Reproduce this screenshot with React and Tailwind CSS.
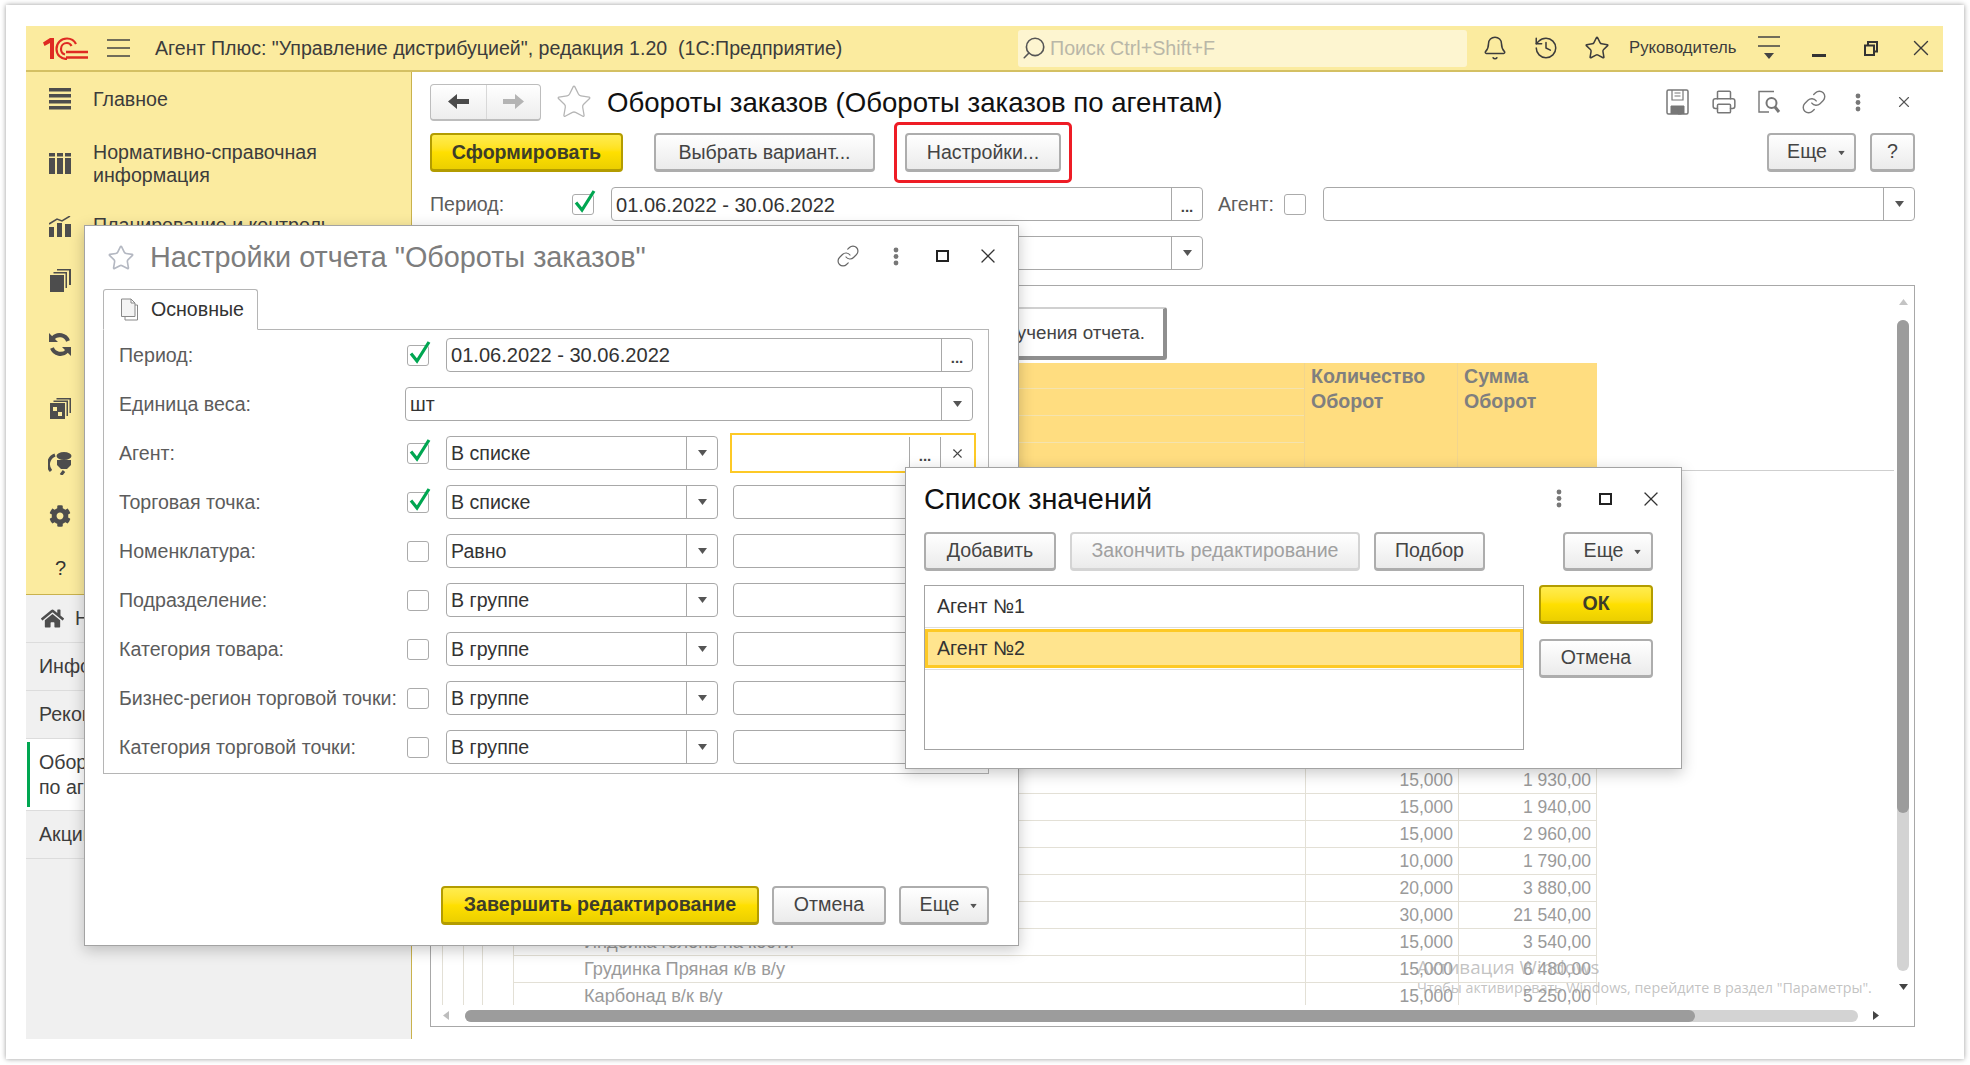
import { Bell, History, Star, Link, X, Search, Printer } from "lucide-react";
import { FaCog, FaHome } from "react-icons/fa";

const filterRows = [
  { label: "Агент:", on: true, cond: "В списке", focus: true },
  { label: "Торговая точка:", on: true, cond: "В списке" },
  { label: "Номенклатура:", on: false, cond: "Равно" },
  { label: "Подразделение:", on: false, cond: "В группе" },
  { label: "Категория товара:", on: false, cond: "В группе" },
  { label: "Бизнес-регион торговой точки:", on: false, cond: "В группе" },
  { label: "Категория торговой точки:", on: false, cond: "В группе" },
];

const reportRows = [
  { name: "", qty: "15,000", sum: "1 930,00" },
  { name: "", qty: "15,000", sum: "1 940,00" },
  { name: "", qty: "15,000", sum: "2 960,00" },
  { name: "", qty: "10,000", sum: "1 790,00" },
  { name: "", qty: "20,000", sum: "3 880,00" },
  { name: "", qty: "30,000", sum: "21 540,00" },
  { name: "Индейка голень на кости", qty: "15,000", sum: "3 540,00" },
  { name: "Грудинка Пряная к/в в/у", qty: "15,000", sum: "6 480,00" },
  { name: "Карбонад в/к в/у", qty: "15,000", sum: "5 250,00" },
];

function Logo() {
  return (
    <svg width="45" height="23" viewBox="0 0 45 23" fill="none" className="shrink-0">
      <path d="M0 5.5 L7 1 H11 V22 H7 V6 L1.5 9 Z" fill="#df2a22" />
      <path d="M33 7 C31 3 27 1.5 24 1.5 C18 1.5 13.5 6 13.5 12 C13.5 18 18 22 24 22" stroke="#df2a22" strokeWidth="2.2" />
      <path d="M28.5 9 C27.5 7 26 6 24 6 C20.5 6 18 8.5 18 12 C18 15 20 17 22 17.5" stroke="#df2a22" strokeWidth="2.2" />
      <path d="M23 15 H45 M23 20.5 H45" stroke="#df2a22" strokeWidth="2.4" />
    </svg>
  );
}

function Caret({ className = "fill-[#555]" }) {
  return (
    <svg width="9" height="6" viewBox="0 0 9 6" className={className}>
      <path d="M0 0 H9 L4.5 6 Z" />
    </svg>
  );
}

function Dots({ className = "fill-[#777]" }) {
  return (
    <svg width="6" height="19" viewBox="0 0 6 19" className={className}>
      <circle cx="3" cy="3" r="2.4" />
      <circle cx="3" cy="9.5" r="2.4" />
      <circle cx="3" cy="16" r="2.4" />
    </svg>
  );
}

function Btn({ children, className = "", disabled }) {
  return (
    <button
      className={`flex h-[39px] items-center justify-center rounded-[4px] border-2 border-b-[3px] bg-linear-to-b from-white to-[#ebebeb] text-[19.6px] ${
        disabled ? "border-[#d4d4d4] text-[#a0a0a0]" : "border-[#adadad] text-[#444]"
      } ${className}`}
    >
      {children}
    </button>
  );
}

function YellowBtn({ children, className = "" }) {
  return (
    <button
      className={`flex h-[39px] items-center justify-center rounded-[4px] border-2 border-b-[3px] border-[#b39c00] bg-linear-to-b from-[#ffec4d] via-[#ffe000] to-[#ebcf00] text-[19.6px] font-bold text-[#3d3d2a] ${className}`}
    >
      {children}
    </button>
  );
}

function MoreBtn({ className = "" }) {
  return (
    <Btn className={`gap-[10px] pl-[10px] ${className}`}>
      Еще
      <Caret className="mt-[2px] scale-75 fill-[#555]" />
    </Btn>
  );
}

function Field({ children, className = "", kind }) {
  return (
    <div className={`flex h-[34px] rounded-[4px] border border-[#a8a8a8] bg-white ${className}`}>
      <div className="flex min-w-0 flex-1 items-center overflow-hidden pt-[1px] pl-[4px] text-[19.6px] text-[#333]">{children}</div>
      {kind === "pick" && (
        <div className="flex w-[31px] items-end justify-center border-l border-[#a8a8a8] pb-[4px] text-[15px] leading-[18px] font-bold text-[#444]">...</div>
      )}
      {kind === "drop" && (
        <div className="flex w-[31px] items-center justify-center border-l border-[#a8a8a8]">
          <Caret />
        </div>
      )}
    </div>
  );
}

function Check({ on }) {
  return (
    <div className="relative h-[21px] w-[22px] shrink-0 rounded-[3px] border border-[#ababab] bg-white">
      {on && (
        <svg width="24" height="24" viewBox="0 0 24 24" fill="none" className="absolute top-[-6px] left-0">
          <path d="M3 13.5 L9 21 L21 2" stroke="#00a651" strokeWidth="3.2" />
        </svg>
      )}
    </div>
  );
}

function DialogControls({ link }) {
  return (
    <div className="-mt-[3px] flex items-center text-[#444]">
      {link && <Link size={24} strokeWidth={1.2} className="mr-[33px] text-[#666]" />}
      <Dots />
      <div className="ml-[37px] h-[12px] w-[13px] border-2 border-[#222]" />
      <X size={24} strokeWidth={1.3} className="ml-[27px] text-[#333]" />
    </div>
  );
}

function SettingsDialog() {
  return (
    <div className="absolute top-[225px] left-[84px] z-10 flex h-[721px] w-[935px] flex-col border border-[#a3a3a3] bg-white shadow-[0_4px_14px_rgba(0,0,0,0.22)]">
      <div className="flex h-[63px] items-center pr-[18px] pl-[22px]">
        <Star size={28} strokeWidth={1.4} className="text-[#b4b8c2]" />
        <div className="ml-[15px] flex-1 text-[28.8px] whitespace-nowrap text-[#7d7d7d]">Настройки отчета "Обороты заказов"</div>
        <DialogControls link />
      </div>
      <div className="relative z-10 -mb-px ml-[18px] flex h-[41px] w-[155px] items-center gap-[12px] rounded-t-[3px] border border-b-white border-[#b5b5b5] bg-white pl-[16px] text-[19.6px] text-[#333]">
        <svg width="19" height="23" viewBox="0 0 19 23" fill="none" stroke="#888" strokeWidth="1">
          <path d="M1.5 1 H11 L15 5 V18.5 H1.5 Z M11 1 V5 H15" fill="#f4f4f4" />
          <path d="M15 7 H17.5 V22 H5 V18.5" />
        </svg>
        Основные
      </div>
      <div className="mr-[29px] ml-[18px] border border-[#b5b5b5] pt-[8px] pb-[9px] pl-[15px]">
        <div className="flex h-[34px] items-center">
          <div className="w-[288px] pt-[1px] text-[19.6px] text-[#5c5c5c]">Период:</div>
          <Check on />
          <Field kind="pick" className="ml-[17px] w-[527px]">
            <span className="text-[20.1px]">01.06.2022 - 30.06.2022</span>
          </Field>
        </div>
        <div className="mt-[15px] flex h-[34px] items-center">
          <div className="w-[286px] pt-[1px] text-[19.6px] text-[#5c5c5c]">Единица веса:</div>
          <Field kind="drop" className="w-[568px]">шт</Field>
        </div>
        {filterRows.map((row) => (
          <div key={row.label} className="mt-[15px] flex h-[34px] items-center">
            <div className="w-[288px] pt-[1px] text-[19.6px] whitespace-nowrap text-[#5c5c5c]">{row.label}</div>
            <Check on={row.on} />
            <Field kind="drop" className="ml-[17px] w-[272px]">{row.cond}</Field>
            {row.focus ? (
              <div className="-my-[3px] ml-[12px] flex h-[40px] w-[246px] border-2 border-[#fdc926] bg-white pl-[4px]">
                <div className="flex-1" />
                <div className="my-[2px] flex w-[31px] items-end justify-center border-l border-[#a8a8a8] pb-[4px] text-[15px] leading-[18px] font-bold text-[#444]">...</div>
                <div className="my-[2px] flex w-[34px] items-center justify-center border-l border-[#a8a8a8]">
                  <X size={15} strokeWidth={1.8} className="text-[#444]" />
                </div>
              </div>
            ) : (
              <Field className="ml-[15px] w-[239px]" />
            )}
          </div>
        ))}
      </div>
      <div className="mt-auto mr-[29px] mb-[20px] flex justify-end gap-[13px]">
        <YellowBtn className="w-[318px]">Завершить редактирование</YellowBtn>
        <Btn className="w-[114px]">Отмена</Btn>
        <MoreBtn className="w-[90px]" />
      </div>
    </div>
  );
}

function ValuesDialog() {
  return (
    <div className="absolute top-[467px] left-[905px] z-20 flex h-[302px] w-[777px] flex-col border border-[#a3a3a3] bg-white px-[18px] shadow-[0_4px_14px_rgba(0,0,0,0.22)]">
      <div className="flex h-[64px] items-center justify-between">
        <div className="text-[28.9px] whitespace-nowrap text-[#111]">Список значений</div>
        <DialogControls />
      </div>
      <div className="flex">
        <Btn className="w-[132px]">Добавить</Btn>
        <Btn disabled className="ml-[14px] w-[290px]">Закончить редактирование</Btn>
        <Btn className="ml-[14px] w-[111px]">Подбор</Btn>
        <MoreBtn className="ml-[78px] w-[90px]" />
      </div>
      <div className="mt-[14px] flex">
        <div className="h-[165px] w-[600px] border border-[#a3a3a3]">
          <div className="flex h-[42px] items-center border-b border-[#dedede] pt-[1px] pl-[12px] text-[19.6px] text-[#333]">Агент №1</div>
          <div className="mt-[1px] flex h-[39px] items-center border-[3px] border-[#fdc926] bg-[#ffe48e] pt-[1px] pl-[9px] text-[19.6px] text-[#333]">Агент №2</div>
          <div className="mt-[1px] border-t border-[#dedede]" />
        </div>
        <div className="ml-[15px] flex flex-col gap-[15px]">
          <YellowBtn className="w-[114px]">ОК</YellowBtn>
          <Btn className="w-[114px]">Отмена</Btn>
        </div>
      </div>
    </div>
  );
}

function Sidebar() {
  return (
    <div className="flex w-[386px] shrink-0 flex-col border-r border-[#c9b24d]">
      <div className="h-[522px] bg-[#fbeb9f] text-[19.6px] text-[#3c3c3c]">
        <div className="flex h-[54px] items-center">
          <svg width="22" height="22" viewBox="0 0 22 22" className="ml-[23px] fill-[#4d4d4d]">
            <path d="M0 0 H22 V3.5 H0 Z M0 6 H22 V9.5 H0 Z M0 12 H22 V15.5 H0 Z M0 18 H22 V21.5 H0 Z" />
          </svg>
          <span className="ml-[22px] pt-[1px]">Главное</span>
        </div>
        <div className="flex h-[75px] items-center">
          <svg width="22" height="21" viewBox="0 0 22 21" className="ml-[23px] fill-[#4d4d4d]">
            <path d="M0 0 H6 V3.5 H0 Z M8 0 H14 V3.5 H8 Z M16 0 H22 V3.5 H16 Z M0 5 H6 V21 H0 Z M8 5 H14 V21 H8 Z M16 5 H22 V21 H16 Z" />
          </svg>
          <span className="ml-[22px] leading-[23px]">Нормативно-справочная<br />информация</span>
        </div>
        <div className="flex h-[56px] items-center pb-[6px]">
          <svg width="22" height="21" viewBox="0 0 22 21" className="ml-[23px] fill-[#4d4d4d]">
            <path d="M0 11 H5 V21 H0 Z M8 7 H13 V21 H8 Z M16 8 H22 V21 H16 Z" />
            <path d="M0 8 L8 3 L13 5 L21 0" stroke="#4d4d4d" strokeWidth="1.5" fill="none" />
          </svg>
          <span className="ml-[22px]">Планирование и контроль</span>
        </div>
        <div className="flex h-[46px] items-center">
          <svg width="21" height="23" viewBox="0 0 21 23" className="ml-[24px] fill-[#4d4d4d]">
            <path d="M0 6 H14 V23 H0 Z" />
            <path d="M3.5 3 H17 V19 H15.5 V4.5 H3.5 Z M7 0 H21 V16 H19 V1.5 H7 Z" />
          </svg>
        </div>
        <div className="flex h-[82px] items-center">
          <svg width="22" height="23" viewBox="0 0 22 23" fill="none" stroke="#4d4d4d" strokeWidth="4" className="ml-[23px]">
            <path d="M19 8 A9 9 0 0 0 4 5 M3 15 A9 9 0 0 0 18 18" />
            <path d="M0 0 V9 H9 Z M22 23 V14 H13 Z" fill="#4d4d4d" stroke="none" />
          </svg>
        </div>
        <div className="flex h-[47px] items-center">
          <svg width="21" height="21" viewBox="0 0 21 21" className="ml-[24px] fill-[#4d4d4d]">
            <path fillRule="evenodd" d="M0 5 H15 V21 H0 Z M3 9 V13 H7 V9 Z M8 14 V18 H12 V14 Z" />
            <path d="M3.5 2.5 H18 V18 H16.5 V4 H3.5 Z M6.5 0 H21 V15 H19.5 V1.5 H6.5 Z" />
          </svg>
        </div>
        <div className="flex h-[62px] items-center">
          <svg width="24" height="24" viewBox="0 0 24 24" fill="none" className="ml-[22px]">
            <ellipse cx="16" cy="5" rx="7.5" ry="4" fill="#4d4d4d" />
            <path d="M9 9 H23 V14 L19 18 H13 L9 14 Z" fill="#4d4d4d" />
            <path d="M7 4 A10 10 0 0 0 3 20 M16 20 L13 24" stroke="#4d4d4d" strokeWidth="3" />
          </svg>
        </div>
        <div className="flex h-[44px] items-center">
          <FaCog size={22} className="ml-[23px] text-[#4d4d4d]" />
        </div>
        <div className="flex h-[59px] items-center">
          <span className="ml-[29px] text-[20px] text-[#333]">?</span>
        </div>
      </div>
      <div className="flex flex-1 flex-col border-t border-[#c9b24d] bg-[#f0f0f0] text-[19.6px] text-[#3c3c3c]">
        <div className="flex h-[48px] shrink-0 items-center border-b border-[#dcdcdc] pl-[15px]">
          <FaHome size={23} className="text-[#4d4d4d]" />
          <span className="ml-[11px]">Начальная страница</span>
        </div>
        <div className="flex h-[48px] shrink-0 items-center border-b border-[#dcdcdc] pl-[13px]">Информация</div>
        <div className="flex h-[48px] shrink-0 items-center border-b border-[#dcdcdc] pl-[13px]">Рекомендации</div>
        <div className="flex h-[72px] shrink-0 items-center border-b border-[#dcdcdc] bg-white py-[3px] pl-[1px]">
          <div className="h-full w-[3px] bg-[#00a651]" />
          <span className="ml-[9px] leading-[25px]">Обороты заказов<br />по агентам</span>
        </div>
        <div className="flex h-[48px] shrink-0 items-center border-b border-[#dcdcdc] pl-[13px]">Акции</div>
      </div>
    </div>
  );
}

function ReportFrame() {
  return (
    <div className="mt-[15px] flex h-[742px] w-[1485px] border border-[#a8a8a8]">
      <div className="flex w-[1463px] flex-col">
        <div className="h-[719px] overflow-hidden">
          <div className="mt-[21px] ml-[92px] flex h-[53px] w-[644px] items-center justify-end rounded-[3px] border-2 border-r-[4px] border-b-[4px] border-[#d0d0d0] border-r-[#8f8f8f] border-b-[#8f8f8f] bg-white pt-[2px] pr-[18px] text-[18.8px] whitespace-nowrap text-[#444]">
            Отчет не сформирован. Нажмите "Сформировать" для получения отчета.
          </div>
          <div className="mt-[3px] h-[108px] border-b border-[#cfcfcf]">
            <div className="ml-[11px] flex h-[107px] w-[1155px] bg-[#ffdd80]">
              <div className="w-[863px] border-r border-[#f2d58d]">
                <div className="h-[26px] border-b border-[#f4e3ae]" />
                <div className="h-[27px] border-b border-[#f4e3ae]" />
                <div className="h-[27px] border-b border-[#f4e3ae]" />
              </div>
              <div className="w-[153px] border-r border-[#f2d58d] pt-[1px] pl-[6px] text-[19.6px] leading-[25px] font-bold text-[#7f7f7f]">Количество<br />Оборот</div>
              <div className="flex-1 pt-[1px] pl-[6px] text-[19.6px] leading-[25px] font-bold text-[#7f7f7f]">Сумма<br />Оборот</div>
            </div>
          </div>
          <div className="ml-[11px] h-[296px]" />
          {reportRows.map((row) => (
            <div key={row.sum} className="ml-[11px] flex h-[27px] w-[1155px] text-[17.5px] text-[#9a9a9a]">
              <div className="w-[21px] border-l border-[#e3e0d6]" />
              <div className="w-[19px] border-l border-[#e3e0d6]" />
              <div className="w-[31px] border-l border-[#e3e0d6]" />
              <div className="flex w-[792px] items-center border-b border-l border-[#e3e0d6] pt-[2px] pl-[70px] text-[18.2px] whitespace-nowrap">{row.name}</div>
              <div className="flex w-[153px] items-center justify-end border-b border-l border-[#e3e0d6] pr-[5px]">{row.qty}</div>
              <div className="flex w-[139px] items-center justify-end border-x border-b border-[#e3e0d6] pr-[5px]">{row.sum}</div>
            </div>
          ))}
        </div>
        <div className="flex flex-1 items-center pl-[12px]">
          <svg width="6" height="9" viewBox="0 0 6 9" className="fill-[#bdbdbd]"><path d="M6 0 V9 L0 4.5 Z" /></svg>
          <div className="ml-[16px] h-[12px] w-[1393px] rounded-full bg-[#d3d3d3]">
            <div className="h-full w-[1230px] rounded-full bg-[#9c9c9c]" />
          </div>
          <svg width="6" height="9" viewBox="0 0 6 9" className="ml-[15px] fill-[#444]"><path d="M0 0 V9 L6 4.5 Z" /></svg>
        </div>
      </div>
      <div className="flex flex-1 flex-col items-center pr-[2px]">
        <svg width="9" height="6" viewBox="0 0 9 6" className="mt-[13px] fill-[#c4c4c4]"><path d="M0 6 H9 L4.5 0 Z" /></svg>
        <div className="mt-[15px] h-[651px] w-[12px] rounded-full bg-[#d3d3d3]">
          <div className="h-[493px] w-full rounded-full bg-[#9c9c9c]" />
        </div>
        <svg width="9" height="6" viewBox="0 0 9 6" className="mt-[13px] fill-[#444]"><path d="M0 0 H9 L4.5 6 Z" /></svg>
      </div>
    </div>
  );
}

export default function App() {
  return (
    <div className="relative h-[1065px] w-[1970px] overflow-hidden bg-white font-['Liberation_Sans',Arial,sans-serif]">
      <div className="mt-[5px] ml-[6px] h-[1054px] w-[1958px] bg-white pt-[21px] pl-[20px] shadow-[0_0_5px_rgba(0,0,0,0.4)]">
        <div className="flex h-[1013px] w-[1917px] flex-col">
          <div className="flex h-[46px] shrink-0 items-center border-b-2 border-[#d4c063] bg-[#fbeb9f] pl-[17px] text-[#3c3c3c]">
            <Logo />
            <svg width="23" height="18" viewBox="0 0 23 18" className="ml-[19px] stroke-[#444]">
              <path d="M0 1 H23 M0 9 H23 M0 17 H23" strokeWidth="1.5" />
            </svg>
            <div className="ml-[25px] w-[863px] pt-[2px] text-[19.6px] whitespace-pre">Агент Плюс: "Управление дистрибуцией", редакция 1.20  (1С:Предприятие)</div>
            <div className="flex h-[37px] w-[449px] items-center rounded-[3px] bg-[#fdf5d0] pl-[3px] text-[19.7px] text-[#b9b7a8]">
              <Search size={26} strokeWidth={1.5} className="-scale-x-100 text-[#555]" />
              <span className="ml-[3px] pt-[2px]">Поиск Ctrl+Shift+F</span>
            </div>
            <Bell size={26} strokeWidth={1.4} className="ml-[15px]" />
            <History size={26} strokeWidth={1.4} className="ml-[25px]" />
            <Star size={26} strokeWidth={1.4} className="ml-[25px]" />
            <span className="ml-[19px] w-[129px] text-[16.7px]">Руководитель</span>
            <svg width="22" height="24" viewBox="0 0 22 24" className="fill-[#444] stroke-[#444]">
              <path d="M0 1 H22 M0 10 H22" strokeWidth="1.5" />
              <path d="M6 17 H16 L11 23 Z" stroke="none" />
            </svg>
            <div className="mt-[15px] ml-[32px] h-[3px] w-[14px] bg-[#333]" />
            <svg width="14" height="15" viewBox="0 0 14 15" fill="none" stroke="#333" strokeWidth="2" className="ml-[38px]">
              <path d="M1 4.5 H10 V14 H1 Z M4 4 V1 H13 V10.5 H10.5" />
            </svg>
            <X size={26} strokeWidth={1.3} className="ml-[30px]" />
          </div>
          <div className="flex min-h-0 flex-1">
            <Sidebar />
            <div className="flex-1 bg-white pt-[12px] pl-[18px]">
              <div className="flex h-[36px] items-center">
                <div className="flex h-[37px] w-[111px] rounded-[4px] border border-b-2 border-[#bdbdbd] bg-linear-to-b from-white to-[#ededed]">
                  <div className="flex w-[56px] items-center justify-center border-r border-[#d8d8d8]">
                    <svg width="21" height="15" viewBox="0 0 21 15" className="fill-[#4a4a4a]"><path d="M0 7.5 L9 0 V5 H21 V10 H9 V15 Z" /></svg>
                  </div>
                  <div className="flex flex-1 items-center justify-center">
                    <svg width="21" height="15" viewBox="0 0 21 15" className="fill-[#b4b4b4]"><path d="M21 7.5 L12 0 V5 H0 V10 H12 V15 Z" /></svg>
                  </div>
                </div>
                <Star size={38} strokeWidth={0.8} className="ml-[14px] text-[#b5b5b5]" />
                <div className="ml-[14px] flex-1 pt-[1px] text-[27.6px] whitespace-nowrap text-[#111]">Обороты заказов (Обороты заказов по агентам)</div>
                <div className="mr-[30px] flex items-center text-[#777]">
                  <svg width="23" height="26" viewBox="0 0 23 26" fill="none" stroke="#777" strokeWidth="1.5">
                    <path d="M2.5 1 H20.5 Q22 1 22 2.5 V23.5 Q22 25 20.5 25 H2.5 Q1 25 1 23.5 V2.5 Q1 1 2.5 1 Z" />
                    <path d="M6 1 V11 H17 V1 M8.5 4 H14.5 M8.5 7 H14.5" strokeWidth="1.2" />
                    <path d="M5 25 V17 H18 V25 M12 19.5 H15.5 V25 H12 Z" fill="#777" strokeWidth="1" />
                  </svg>
                  <Printer size={26} strokeWidth={1.4} className="ml-[22px]" />
                  <svg width="24" height="24" viewBox="0 0 24 24" fill="none" stroke="#777" strokeWidth="1.4" className="ml-[20px]">
                    <path d="M17 1.5 H2 V22 H12" />
                    <circle cx="14.5" cy="13" r="5" strokeWidth="2" />
                    <path d="M18 17 L22 22" strokeWidth="3" />
                  </svg>
                  <Link size={26} strokeWidth={1.3} className="ml-[20px]" />
                  <div className="ml-[28px]"><Dots /></div>
                  <X size={18} strokeWidth={1.5} className="ml-[34px] text-[#555]" />
                </div>
              </div>
              <div className="mt-[13px] flex h-[39px] w-[1485px] items-center">
                <YellowBtn className="w-[193px] pt-[2px]">Сформировать</YellowBtn>
                <Btn className="ml-[31px] w-[221px] pt-[2px]">Выбрать вариант...</Btn>
                <div className="ml-[19px] -my-[11px] rounded-[5px] border-[3px] border-[#ee1c25] p-[8px]">
                  <Btn className="w-[156px] pt-[2px]">Настройки...</Btn>
                </div>
                <MoreBtn className="ml-auto w-[89px]" />
                <Btn className="ml-[14px] w-[45px] text-[#222]">?</Btn>
              </div>
              <div className="mt-[15px] flex h-[34px] w-[1485px] items-center text-[19.6px] text-[#5c5c5c]">
                <div className="w-[142px] pt-[2px]">Период:</div>
                <Check on />
                <Field kind="pick" className="ml-[17px] w-[592px]">
                  <span className="pt-[1px] text-[20.1px]">01.06.2022 - 30.06.2022</span>
                </Field>
                <div className="ml-[15px] w-[66px] pt-[2px]">Агент:</div>
                <Check />
                <Field kind="drop" className="ml-[17px] w-[592px]" />
              </div>
              <div className="mt-[15px] flex h-[34px] items-center">
                <Field kind="drop" className="ml-[181px] w-[592px]" />
              </div>
              <ReportFrame />
            </div>
          </div>
        </div>
      </div>
      <SettingsDialog />
      <ValuesDialog />
      <div className="absolute top-[953px] left-[1417px] z-0 text-[18.8px] text-[#a8a8a8]/70 font-['Open_Sans',sans-serif]">Активация Windows</div>
      <div className="absolute top-[977px] left-[1417px] z-0 text-[14.3px] whitespace-nowrap text-[#a8a8a8]/70 font-['Open_Sans',sans-serif]">Чтобы активировать Windows, перейдите в раздел "Параметры".</div>
    </div>
  );
}
